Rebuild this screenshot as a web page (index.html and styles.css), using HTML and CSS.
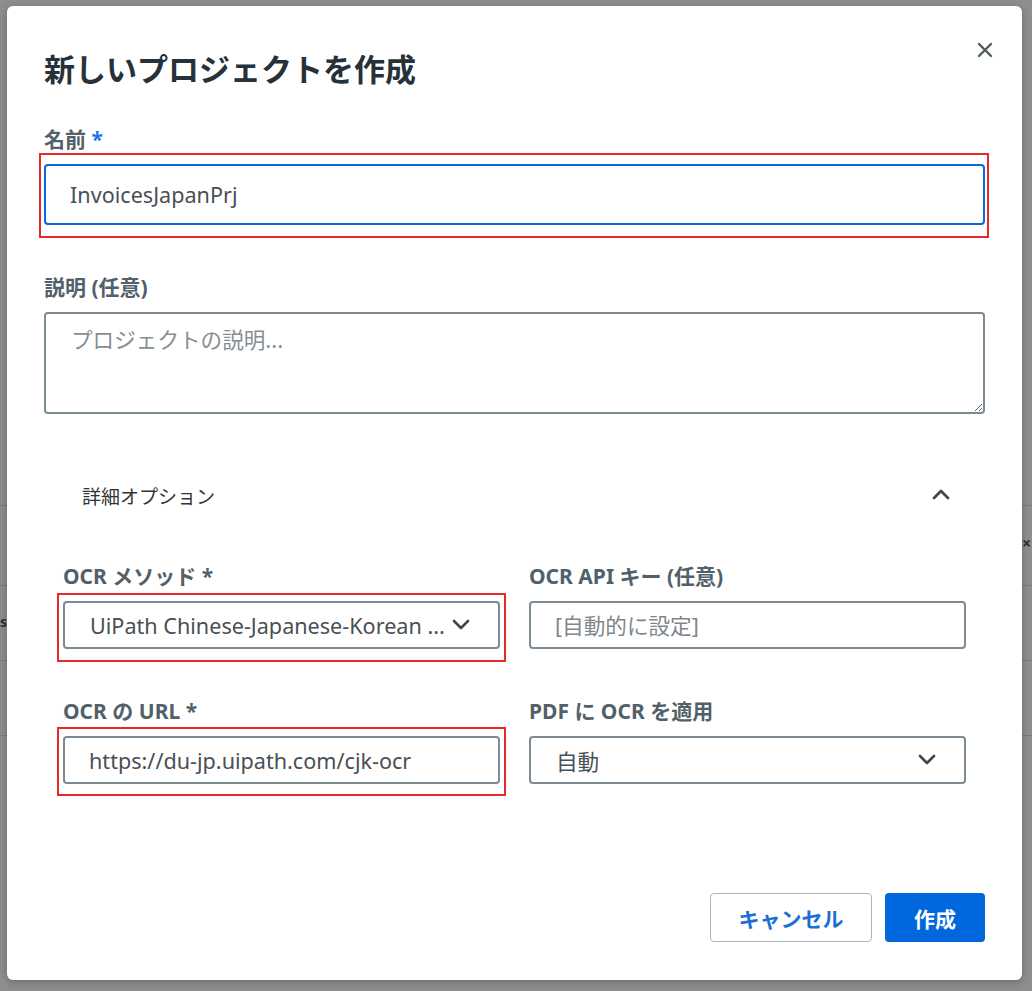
FILE: index.html
```html
<!DOCTYPE html>
<html lang="ja">
<head>
<meta charset="utf-8">
<title>新しいプロジェクトを作成</title>
<link rel="stylesheet" href="styles.css">
</head>
<body>
<div class="backdrop">
  <span class="bg-glyph bg-s">s</span>
  <span class="bg-glyph bg-x">×</span>
</div>
<div class="dialog" role="dialog" aria-labelledby="dlg-title">
  <button class="close" aria-label="閉じる">
    <svg width="16" height="16" viewBox="0 0 16 16"><path d="M2 2 L14 14 M14 2 L2 14" stroke="#4f5a62" stroke-width="2.4" stroke-linecap="round" fill="none"/></svg>
  </button>
  <h1 id="dlg-title" class="title">新しいプロジェクトを作成</h1>

  <label class="label first">名前 <span class="req">*</span></label>
  <div class="mark mark-name">
    <input class="field field-name" type="text" value="InvoicesJapanPrj">
  </div>

  <label class="label desc-label">説明 (任意)</label>
  <textarea class="textarea" placeholder="プロジェクトの説明..."></textarea>

  <div class="advanced">
    <div class="adv-header">
      <span class="adv-title">詳細オプション</span>
      <svg class="chev-up" width="18" height="12" viewBox="0 0 18 12"><path d="M2 10 L9 3 L16 10" stroke="#3b4850" stroke-width="2.8" fill="none" stroke-linecap="round" stroke-linejoin="round"/></svg>
    </div>
    <div class="grid">
      <div class="cell">
        <label class="label small">OCR メソッド *</label>
        <div class="mark mark-sel">
          <div class="field select">
            <span class="sel-text">UiPath Chinese-Japanese-Korean ...</span>
            <svg class="chev" width="18" height="12" viewBox="0 0 18 12"><path d="M2 2 L9 9 L16 2" stroke="#3b4850" stroke-width="2.6" fill="none" stroke-linecap="round" stroke-linejoin="round"/></svg>
          </div>
        </div>
      </div>
      <div class="cell">
        <label class="label small">OCR API キー (任意)</label>
        <input class="field plain" type="text" placeholder="[自動的に設定]">
      </div>
      <div class="cell row2">
        <label class="label small">OCR の URL *</label>
        <div class="mark mark-url">
          <input class="field plain" type="text" value="https://du-jp.uipath.com/cjk-ocr">
        </div>
      </div>
      <div class="cell row2">
        <label class="label small">PDF に OCR を適用</label>
        <div class="field select">
          <span class="sel-text">自動</span>
          <svg class="chev" width="18" height="12" viewBox="0 0 18 12"><path d="M2 2 L9 9 L16 2" stroke="#3b4850" stroke-width="2.6" fill="none" stroke-linecap="round" stroke-linejoin="round"/></svg>
        </div>
      </div>
    </div>
  </div>

  <div class="actions">
    <button class="btn btn-cancel">キャンセル</button>
    <button class="btn btn-primary">作成</button>
  </div>
</div>
</body>
</html>
```

FILE: styles.css
```css
* { box-sizing: border-box; }

html, body {
  margin: 0;
  padding: 0;
}

body {
  width: 1032px;
  height: 991px;
  overflow: hidden;
  position: relative;
  font-family: "Noto Sans", "Noto Sans CJK JP", sans-serif;
  background-color: #8e8e8e;
  background-image:
    linear-gradient(to bottom, transparent 505px, #7b7b7b 505px, #7b7b7b 506px, transparent 506px),
    linear-gradient(to bottom, transparent 585px, #7b7b7b 585px, #7b7b7b 586px, transparent 586px),
    linear-gradient(to bottom, transparent 660px, #7b7b7b 660px, #7b7b7b 661px, transparent 661px),
    linear-gradient(to bottom, transparent 735px, #7b7b7b 735px, #7b7b7b 736px, transparent 736px);
  padding: 6px 10px 11px 7px;
}

.backdrop {
  position: absolute;
  inset: 0;
  pointer-events: none;
}

.bg-glyph {
  position: absolute;
  font-family: "Noto Sans", sans-serif;
  font-weight: 700;
  color: #2c3338;
  font-size: 14px;
  line-height: 16px;
}
.bg-s { left: 0; top: 614px; }
.bg-x { left: 1022px; top: 535px; font-size: 16px; }

.dialog {
  position: relative;
  width: 1015px;
  height: 974px;
  background: #ffffff;
  border-radius: 6px;
  box-shadow: 0 2px 8px rgba(0, 0, 0, 0.25);
  padding: 42px 37px 38px 37px;
  display: flex;
  flex-direction: column;
}

.close {
  position: absolute;
  top: 30px;
  right: 23px;
  width: 28px;
  height: 28px;
  padding: 0;
  border: 0;
  background: transparent;
  display: flex;
  align-items: center;
  justify-content: center;
}

.title {
  margin: 0;
  font-family: "Noto Sans CJK JP", "Noto Sans", sans-serif;
  font-size: 31px;
  line-height: 40px;
  font-weight: 700;
  color: #273139;
}

.label {
  display: block;
  font-family: "Noto Sans", "Noto Sans CJK JP", sans-serif;
  font-size: 21px;
  line-height: 28px;
  font-weight: 700;
  color: #526069;
  margin-bottom: 11px;
}
.label.first { margin-top: 37px; }
.desc-label { margin-top: 48px; }
.req { color: #1a73e8; }

.mark {
  position: relative;
}
.mark::after {
  content: "";
  position: absolute;
  border: 2px solid #e62a2a;
  pointer-events: none;
}
.mark-name::after { left: -5px; top: -11px; right: -4px; bottom: -13px; }
.mark-sel::after { left: -6px; top: -8px; right: -6px; bottom: -13px; }
.mark-url::after { left: -6px; top: -9px; right: -6px; bottom: -12px; }

.field {
  display: block;
  width: 100%;
  font-family: "Noto Sans", "Noto Sans CJK JP", sans-serif;
  font-size: 21.6px;
  color: #4a4f54;
  background: #fff;
  border: 2px solid #7c8a93;
  border-radius: 4px;
  outline: none;
  margin: 0;
}

.field-name {
  height: 61px;
  border-color: #0b67dc;
  padding: 0 24px;
}

.textarea {
  display: block;
  width: 100%;
  height: 102px;
  font-family: "Noto Sans CJK JP", "Noto Sans", sans-serif;
  font-size: 21.6px;
  line-height: 28px;
  color: #4a4f54;
  border: 2px solid #7c8a93;
  border-radius: 4px;
  padding: 11px 25px;
  resize: vertical;
  outline: none;
  margin: 0;
}
.textarea::placeholder { color: #868e94; }

.advanced {
  margin-top: 68px;
  padding: 0 19px;
}

.adv-header {
  display: flex;
  align-items: center;
  justify-content: space-between;
  height: 28px;
  padding: 0 16px 0 19px;
}
.adv-title {
  font-family: "Noto Sans CJK JP", sans-serif;
  font-size: 19px;
  line-height: 28px;
  color: #2f3438;
}
.chev-up { margin-top: -4px; }

.grid {
  margin-top: 52px;
  display: grid;
  grid-template-columns: 437px 437px;
  column-gap: 29px;
  row-gap: 48px;
}

.label.small { margin-bottom: 11px; }

.plain {
  height: 48px;
  padding: 0 24px;
}
.plain::placeholder { color: #7f878d; }

.select {
  height: 48px;
  display: flex;
  align-items: center;
  padding: 0 28px 0 25px;
  gap: 4px;
}
.sel-text {
  flex: 1;
  min-width: 0;
  white-space: nowrap;
  overflow: hidden;
  text-overflow: ellipsis;
  color: #4a4f54;
}
.chev { flex: none; }

.actions {
  margin-top: auto;
  display: flex;
  justify-content: flex-end;
  gap: 13px;
}

.btn {
  height: 49px;
  font-family: "Noto Sans CJK JP", sans-serif;
  font-size: 21px;
  font-weight: 700;
  border-radius: 4px;
  padding: 0;
}
.btn-cancel {
  width: 162px;
  background: #fff;
  color: #1a6fd3;
  border: 1.5px solid #a9b6bd;
}
.btn-primary {
  width: 100px;
  background: #0067df;
  color: #fff;
  border: 0;
}
```
